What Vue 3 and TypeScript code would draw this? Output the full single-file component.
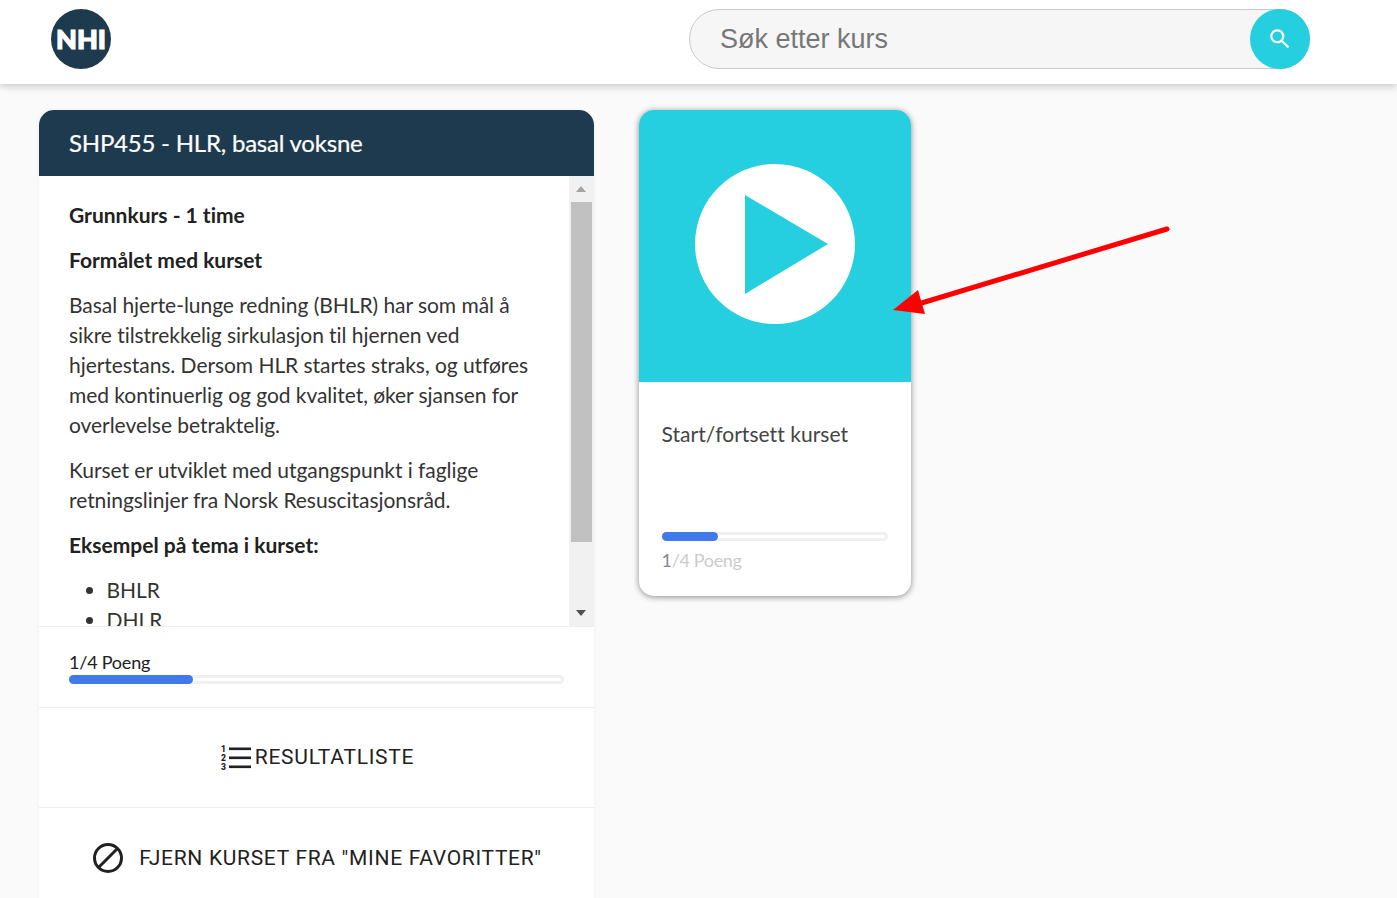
<script setup lang="ts">
const description = [
  'Basal hjerte-lunge redning (BHLR) har som mål å sikre tilstrekkelig sirkulasjon til hjernen ved hjertestans. Dersom HLR startes straks, og utføres med kontinuerlig og god kvalitet, øker sjansen for overlevelse betraktelig.',
  'Kurset er utviklet med utgangspunkt i faglige retningslinjer fra Norsk Resuscitasjonsråd.',
]
const topics = ['BHLR', 'DHLR']
const progress = 25
</script>

<template>
  <div class="page">
    <header class="topbar">
      <div class="logo">NHI</div>
      <div class="search">
        <span class="search-text">Søk etter kurs</span>
        <button class="search-btn" type="button" aria-label="Søk">
          <svg width="26" height="26" viewBox="0 0 24 24" fill="#fff">
            <path d="M15.5 14h-.79l-.28-.27A6.47 6.47 0 0 0 16 9.5 6.5 6.5 0 1 0 9.5 16c1.61 0 3.09-.59 4.23-1.57l.27.28v.79l5 4.99L20.49 19l-4.99-5zm-6 0C7.01 14 5 11.99 5 9.5S7.01 5 9.5 5 14 7.01 14 9.5 11.99 14 9.5 14z" />
          </svg>
        </button>
      </div>
    </header>

    <main class="content">
      <section class="course">
        <h1 class="course-title">SHP455 - HLR, basal voksne</h1>

        <div class="course-body">
          <div class="course-text">
            <p><strong>Grunnkurs - 1 time</strong></p>
            <p><strong>Formålet med kurset</strong></p>
            <p v-for="text in description" :key="text">{{ text }}</p>
            <p><strong>Eksempel på tema i kurset:</strong></p>
            <ul>
              <li v-for="topic in topics" :key="topic">{{ topic }}</li>
            </ul>
          </div>
          <div class="scrollbar">
            <span class="arrow arrow-up"></span>
            <span class="thumb"></span>
            <span class="arrow arrow-down"></span>
          </div>
        </div>

        <div class="course-progress">
          <div class="points">1/4 Poeng</div>
          <div class="bar"><div class="bar-fill" :style="{ width: progress + '%' }"></div></div>
        </div>

        <div class="action action-results">
          <svg class="rank-icon" width="30" height="30" viewBox="0 0 30 30" fill="#212121">
            <rect x="8" y="4.5" width="22" height="2.6" />
            <rect x="8" y="13.5" width="22" height="2.6" />
            <rect x="8" y="22.5" width="22" height="2.6" />
            <text class="rank" x="0" y="9">1</text>
            <text class="rank" x="0" y="18">2</text>
            <text class="rank" x="0" y="27">3</text>
          </svg>
          <span>RESULTATLISTE</span>
        </div>

        <div class="action action-remove">
          <svg width="32" height="32" viewBox="0 0 32 32" fill="none" stroke="#212121" stroke-width="3">
            <circle cx="16" cy="16" r="13.5" />
            <line x1="7" y1="25" x2="25" y2="7" />
          </svg>
          <span>FJERN KURSET FRA "MINE FAVORITTER"</span>
        </div>
      </section>

      <article class="lesson">
        <div class="lesson-thumb">
          <svg width="160" height="160" viewBox="0 0 160 160">
            <circle cx="80" cy="80" r="80" fill="#fff" />
            <path d="M50 31 L133 80 L50 130 Z" fill="#26cfdf" />
          </svg>
        </div>
        <div class="lesson-body">
          <div class="lesson-title">Start/fortsett kurset</div>
          <div class="bar bar-small"><div class="bar-fill" :style="{ width: progress + '%' }"></div></div>
          <div class="lesson-points"><span>1</span>/4 Poeng</div>
        </div>
      </article>
    </main>

    <svg class="annotation" width="300" height="110" viewBox="0 0 300 110">
      <line x1="287" y1="19" x2="35" y2="95" stroke="#ff0000" stroke-width="5" stroke-linecap="round" />
      <path d="M13 100 L38 80 L45 104 Z" fill="#ff0000" />
    </svg>
  </div>
</template>

<style>
html,
body {
  margin: 0;
  background: #fafafa;
}
</style>

<style scoped>
.page {
  position: relative;
  height: 898px;
  overflow: hidden;
  background: #fafafa;
  color: #212121;
  font-family: Lato, "Liberation Sans", sans-serif;
  font-variant-ligatures: none;
}

.topbar {
  position: relative;
  z-index: 1;
  display: flex;
  align-items: center;
  height: 84px;
  padding: 0 87px 6px 51px;
  box-sizing: border-box;
  background: #fff;
  box-shadow: 0 2px 8px rgba(0, 0, 0, 0.22);
}

.logo {
  display: flex;
  align-items: center;
  justify-content: center;
  width: 60px;
  height: 60px;
  padding-bottom: 2px;
  box-sizing: border-box;
  border-radius: 50%;
  background: #1e3a4f;
  color: #fff;
  font-size: 27px;
  font-weight: 900;
  -webkit-text-stroke: 1.2px #fff;
}

.search {
  display: flex;
  align-items: center;
  justify-content: space-between;
  width: 621px;
  height: 60px;
  margin-left: auto;
  box-sizing: border-box;
  border: 1px solid #c8c8c8;
  border-radius: 30px;
  background: #f6f6f6;
}

.search-text {
  padding-left: 30px;
  font-family: "Liberation Sans", Arial, sans-serif;
  font-size: 27px;
  color: #777;
}

.search-btn {
  display: flex;
  align-items: center;
  justify-content: center;
  width: 60px;
  height: 60px;
  margin: -1px;
  padding: 0;
  border: 0;
  border-radius: 50%;
  background: #26cfdf;
}

.content {
  display: flex;
  align-items: flex-start;
  gap: 45px;
  padding: 26px 0 0 39px;
}

.course {
  flex: none;
  width: 555px;
  background: #fff;
  border-radius: 15px 15px 0 0;
  box-shadow: 0 0 4px rgba(0, 0, 0, 0.05);
}

.course-title {
  margin: 0;
  padding: 0 30px;
  border-radius: 15px 15px 0 0;
  background: #1e3a4f;
  color: #fff;
  font-size: 24px;
  font-weight: 400;
  line-height: 66px;
  letter-spacing: -0.22px;
  -webkit-text-stroke: 0.2px #fff;
}

.course-body {
  display: flex;
  height: 450px;
}

.course-text {
  flex: 1;
  min-width: 0;
  padding: 24px 30px 0;
  overflow: hidden;
  font-size: 21px;
  line-height: 30px;
  letter-spacing: -0.05px;
  color: #333;
}

.course-text p {
  margin: 0 0 15px;
}

.course-text strong {
  font-weight: 700;
  letter-spacing: 0;
  color: #212121;
}

.course-text ul {
  margin: 0;
  padding-left: 37.5px;
}

.scrollbar {
  position: relative;
  flex: none;
  width: 25px;
  background: #f1f1f1;
}

.thumb {
  position: absolute;
  top: 26px;
  left: 2px;
  width: 21px;
  height: 340px;
  background: #c1c1c1;
}

.arrow {
  position: absolute;
  left: 7px;
  width: 0;
  height: 0;
  border-left: 5.5px solid transparent;
  border-right: 5.5px solid transparent;
}

.arrow-up {
  top: 10px;
  border-bottom: 6px solid #a3a3a3;
}

.arrow-down {
  bottom: 10px;
  border-top: 6px solid #505050;
}

.course-progress {
  height: 81px;
  padding: 23px 30px 0;
  box-sizing: border-box;
  border-top: 1px solid #eee;
}

.points {
  margin-bottom: 1px;
  font-size: 18px;
  line-height: 24px;
  letter-spacing: -0.22px;
  color: #212121;
}

.bar {
  height: 9px;
  border-radius: 5px;
  background: #fff;
  box-shadow: inset 0 0 0 3px #f0f0f0;
}

.bar-fill {
  height: 9px;
  border-radius: 5px;
  background: #4178ea;
}

.action {
  display: flex;
  align-items: center;
  justify-content: center;
  box-sizing: border-box;
  border-top: 1px solid #eee;
  font-family: Roboto, "Liberation Sans", sans-serif;
  font-size: 21px;
  letter-spacing: 0.72px;
  color: #212121;
}

.rank {
  font-family: Roboto, "Liberation Sans", sans-serif;
  font-size: 8.5px;
  font-weight: 900;
  letter-spacing: 0;
}

.action-results {
  height: 100px;
  gap: 4px;
  padding-left: 2px;
}

.action-results span {
  padding-bottom: 1px;
}

.action-remove {
  height: 100px;
  gap: 15px;
  padding-left: 1px;
  letter-spacing: 0.69px;
}

.lesson {
  flex: none;
  width: 272px;
  height: 486px;
  overflow: hidden;
  border-radius: 15px;
  background: #fff;
  box-shadow: 0 1px 6px rgba(0, 0, 0, 0.45);
}

.lesson-thumb {
  display: flex;
  align-items: center;
  justify-content: center;
  height: 272px;
  padding-bottom: 4px;
  box-sizing: border-box;
  background: #26cfdf;
}

.lesson-body {
  padding: 37px 23px 0 22.6px;
}

.lesson-title {
  height: 113px;
  font-size: 21px;
  line-height: 30px;
  letter-spacing: 0.04px;
  color: #444;
}

.lesson-points {
  margin-top: 7px;
  font-size: 18px;
  line-height: 24px;
  letter-spacing: -0.35px;
  color: #ccc;
}

.lesson-points span {
  color: #888;
}

.annotation {
  position: absolute;
  top: 210px;
  left: 880px;
  z-index: 2;
}
</style>
